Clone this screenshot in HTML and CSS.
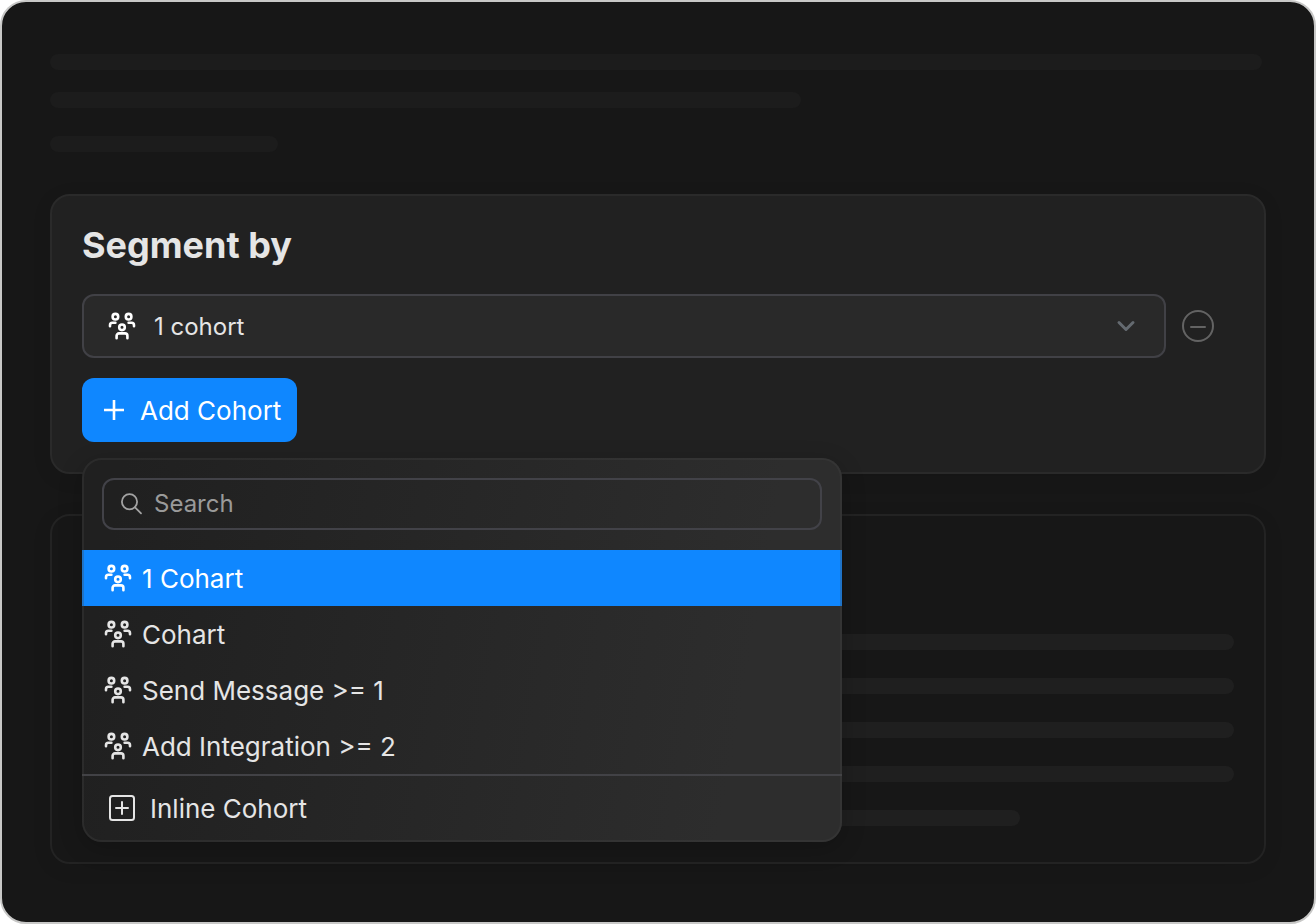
FILE: index.html
```html
<!DOCTYPE html>
<html lang="en">
<head>
<meta charset="utf-8">
<title>Segment by</title>
<link rel="stylesheet" href="styles.css">
</head>
<body>
<svg class="sprite" aria-hidden="true">
  <symbol id="people" viewBox="0 0 28 28">
    <g fill="none" stroke="currentColor" stroke-width="2.6" stroke-linecap="round" stroke-linejoin="round">
      <circle cx="7.4" cy="4.7" r="2.8"/>
      <circle cx="20.6" cy="4.7" r="2.8"/>
      <circle cx="14" cy="15.3" r="2.8"/>
      <path d="M2 14.2v-1a2.4 2.4 0 0 1 2.4-2.4h3"/>
      <path d="M26 14.2v-1a2.4 2.4 0 0 0-2.4-2.4h-3"/>
      <path d="M8.6 26.2v-2.4a2.4 2.4 0 0 1 2.4-2.4h6a2.4 2.4 0 0 1 2.4 2.4v2.4"/>
    </g>
  </symbol>
</svg>
<main class="frame">
  <div class="intro">
    <div class="bar bar-full"></div>
    <div class="bar bar-medium"></div>
    <div class="bar bar-short"></div>
  </div>

  <section class="card">
    <h1 class="title">Segment by</h1>
    <div class="row">
      <div class="select-box">
        <svg class="icon select-icon" aria-hidden="true"><use href="#people"/></svg>
        <select class="select" aria-label="Cohort">
          <option>1 cohort</option>
        </select>
        <svg class="chevron" viewBox="0 0 20 12" aria-hidden="true"><path d="M3 2.500l7 7 7-7" fill="none" stroke="currentColor" stroke-width="3" stroke-linecap="round" stroke-linejoin="round"/></svg>
      </div>
      <button class="remove" type="button" aria-label="Remove cohort">
        <svg viewBox="0 0 32 32" aria-hidden="true"><g fill="none" stroke="currentColor" stroke-width="2" stroke-linecap="round"><circle cx="16" cy="16" r="15"/><path d="M9 17h14"/></g></svg>
      </button>
    </div>
    <div class="add-area">
      <button class="add" type="button">
        <svg class="plus" viewBox="0 0 20 20" aria-hidden="true"><path d="M10 0v20M0 10h20" stroke="currentColor" stroke-width="2.600"/></svg>
        Add Cohort
      </button>
      <div class="menu">
        <div class="search-box">
          <svg class="search-icon" viewBox="0 0 22 22" aria-hidden="true"><g fill="none" stroke="currentColor" stroke-width="1.800" stroke-linecap="round"><circle cx="9.500" cy="8.800" r="7.600"/><path d="M15 14.300l6 6"/></g></svg>
          <input class="search" type="text" placeholder="Search" aria-label="Search">
        </div>
        <ul class="options">
          <li><button class="option is-active" type="button"><svg class="icon" aria-hidden="true"><use href="#people"/></svg>1 Cohart</button></li>
          <li><button class="option" type="button"><svg class="icon" aria-hidden="true"><use href="#people"/></svg>Cohart</button></li>
          <li><button class="option" type="button"><svg class="icon" aria-hidden="true"><use href="#people"/></svg>Send Message &gt;= 1</button></li>
          <li><button class="option" type="button"><svg class="icon" aria-hidden="true"><use href="#people"/></svg>Add Integration &gt;= 2</button></li>
        </ul>
        <button class="inline-cohort" type="button">
          <svg class="icon" viewBox="0 0 28 28" aria-hidden="true"><g fill="none" stroke="currentColor" stroke-width="2" stroke-linecap="round"><rect x="2" y="2" width="24" height="24" rx="2.500"/><path d="M14 8v12M8 14h12"/></g></svg>
          Inline Cohort
        </button>
      </div>
    </div>
  </section>

  <section class="card card-plain">
    <div class="bar"></div>
    <div class="bar"></div>
    <div class="bar"></div>
    <div class="bar"></div>
    <div class="bar bar-last"></div>
  </section>
</main>
</body>
</html>
```

FILE: styles.css
```css
* {
  box-sizing: border-box;
}

body {
  margin: 0;
  background: #ffffff;
  color: #e5e5e5;
  font-family: Inter, "Liberation Sans", sans-serif;
  font-size: 26px;
  font-weight: 400;
}

button,
input,
select {
  margin: 0;
  padding: 0;
  border: 0;
  background: none;
  color: inherit;
  font: inherit;
}

svg {
  display: block;
  flex: none;
}

.sprite {
  position: absolute;
  width: 0;
  height: 0;
}

.frame {
  display: flex;
  flex-direction: column;
  gap: 40px;
  min-height: 100vh;
  padding: 52px 48px 58px;
  border: 2px solid #c8c8c7;
  border-radius: 26px;
  background: #171717;
}

.bar {
  height: 16px;
  border-radius: 8px;
  background: #1f1f1f;
}

.intro {
  display: flex;
  flex-direction: column;
  margin-bottom: 2px;
  padding-right: 4px;
}

.intro .bar {
  background: #1c1c1c;
}

.bar-medium {
  width: 62%;
  margin-top: 22px;
}

.intro .bar-short {
  width: 228px;
  margin-top: 28px;
}

.card {
  padding: 29px 50px 30px 30px;
  border: 2px solid #2a2a2a;
  border-radius: 20px;
  background: #212121;
  box-shadow: 0 4px 20px rgba(0, 0, 0, 0.08);
}

.card-plain {
  display: flex;
  flex-direction: column;
  gap: 28px;
  padding: 118px 30px 36px;
  border-color: #232323;
  background: #171717;
}

.bar-last {
  width: 938px;
  max-width: 82%;
}

.title {
  margin: 0 0 29px;
  font-size: 36px;
  font-weight: 700;
  line-height: 40px;
}

.row {
  display: flex;
  align-items: center;
  gap: 16px;
}

.icon {
  width: 28px;
  height: 28px;
}

.select-box {
  display: grid;
  flex: 1;
  grid-template-columns: 72px 1fr 56px;
  align-items: center;
}

.select {
  grid-area: 1 / 1 / 2 / 4;
  height: 64px;
  padding: 0 70px;
  border: 2px solid #414146;
  border-radius: 12px;
  appearance: none;
  background: #292929;
  font-size: 24px;
}

.select-icon {
  z-index: 1;
  grid-area: 1 / 1;
  margin-left: 26px;
  color: #ffffff;
  pointer-events: none;
}

.chevron {
  z-index: 1;
  grid-area: 1 / 3;
  width: 20px;
  height: 12px;
  margin-left: 6px;
  color: #646a70;
  pointer-events: none;
}

.remove {
  width: 32px;
  height: 32px;
  color: #636363;
}

.add-area {
  position: relative;
  margin-top: 20px;
}

.add {
  display: flex;
  align-items: center;
  gap: 16px;
  height: 64px;
  padding: 0 16px 0 22px;
  border-radius: 12px;
  background: #0f87ff;
  color: #ffffff;
}

.plus {
  width: 20px;
  height: 20px;
}

.menu {
  position: absolute;
  z-index: 2;
  top: calc(100% + 16px);
  left: 0;
  width: 760px;
  max-width: 100%;
  padding-top: 20px;
  border-radius: 20px;
  background: linear-gradient(100deg, #202020 5%, #2d2d2d 85%);
  box-shadow: 0 6px 24px rgba(0, 0, 0, 0.2);
}

.menu::after {
  position: absolute;
  inset: 0;
  border: 2px solid rgba(70, 70, 70, 0.3);
  border-radius: 20px;
  content: "";
  pointer-events: none;
}

.search-box {
  display: flex;
  align-items: center;
  gap: 12px;
  height: 52px;
  margin: 0 20px 20px;
  padding: 0 16px;
  border: 2px solid #424248;
  border-radius: 12px;
}

.search-icon {
  width: 22px;
  height: 22px;
  color: #a3a3a3;
}

.search {
  flex: 1;
  min-width: 0;
  height: 46px;
  padding-bottom: 2px;
  outline: 0;
  font-size: 24px;
}

.search::placeholder {
  color: #9a9a9a;
}

.options {
  margin: 0;
  padding: 0;
  list-style: none;
}

.option {
  display: flex;
  align-items: center;
  gap: 10px;
  width: 100%;
  height: 56px;
  padding: 0 22px;
}

.option.is-active {
  background: #0f87ff;
  color: #ffffff;
}

.inline-cohort {
  display: flex;
  align-items: center;
  gap: 14px;
  width: 100%;
  height: 68px;
  padding: 0 26px 2px;
  border-top: 2px solid #424246;
}
```
